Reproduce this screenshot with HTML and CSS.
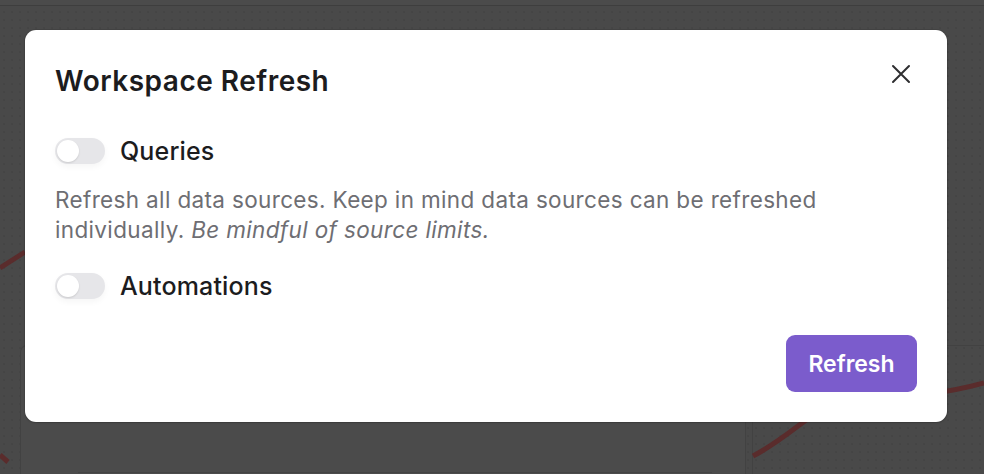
FILE: index.html
```html
<!DOCTYPE html>
<html lang="en">
<head>
<meta charset="utf-8">
<title>Workspace Refresh</title>
<link rel="stylesheet" href="styles.css">
</head>
<body>
<div class="app">
  <div class="topbar"></div>
  <div class="board">
    <div class="card card-left"><div class="card-rule"></div></div>
    <div class="card card-right"></div>
  </div>
  <svg class="chart-lines" width="984" height="474" viewBox="0 0 984 474">
    <path d="M0 268 L25 252" />
    <path d="M0 455 L8 462" />
    <path d="M753 456 C790 437 812 410 838 402 C880 398 930 398 984 383" />
  </svg>
</div>
<div class="overlay">
  <div class="modal">
    <div class="modal-head">
      <h2 class="modal-title">Workspace Refresh</h2>
      <button class="close-btn" aria-label="Close">
        <svg width="20" height="20" viewBox="0 0 20 20"><path d="M2 2 L18 18 M18 2 L2 18" /></svg>
      </button>
    </div>
    <div class="option option-first">
      <span class="toggle"><span class="thumb"></span></span>
      <span class="option-label">Queries</span>
    </div>
    <p class="desc">Refresh all data sources. Keep in mind data sources can be refreshed individually. <em>Be mindful of source limits.</em></p>
    <div class="option option-second">
      <span class="toggle"><span class="thumb"></span></span>
      <span class="option-label">Automations</span>
    </div>
    <div class="modal-foot">
      <button class="primary-btn">Refresh</button>
    </div>
  </div>
</div>
</body>
</html>
```

FILE: styles.css
```css
* { box-sizing: border-box; }
html, body { margin: 0; padding: 0; }
body {
  width: 984px;
  height: 474px;
  overflow: hidden;
  background: #4a4a4a;
  font-family: Inter, "Noto Sans", "Liberation Sans", sans-serif;
  position: relative;
}
.app {
  position: absolute;
  inset: 0;
  display: flex;
  flex-direction: column;
  background-color: #494949;
  background-image: radial-gradient(circle, #454545 0.7px, transparent 1.1px);
  background-size: 8px 8px;
}
.topbar {
  height: 6px;
  border-bottom: 1px solid #3e3e3e;
  background: #4b4b4b;
}
.board {
  flex: 1;
  display: flex;
  gap: 6px;
  padding: 339px 0 0 20px;
}
.card {
  border: 1px solid #424242;
  border-bottom: none;
  border-radius: 7px 7px 0 0;
  background: #4b4b4b;
}
.card-left { width: 726px; padding: 126px 0 0 57px; }
.card-rule { width: 634px; height: 1px; background: #434343; }
.card-right { flex: 1; border-right: none; border-radius: 7px 0 0 0; background: transparent; }
.chart-lines {
  position: absolute;
  left: 0; top: 0;
  fill: none;
  stroke: #5a2c2c;
  stroke-width: 5;
}
.overlay {
  position: absolute;
  inset: 0;
}
.modal {
  position: absolute;
  left: 25px;
  top: 30px;
  width: 922px;
  height: 392px;
  background: #fff;
  border-radius: 11px;
  box-shadow: 0 0 0 1px rgba(0,0,0,0.08), 0 1px 2px rgba(0,0,0,0.15);
  padding: 35px 30px 30px 30px;
  display: flex;
  flex-direction: column;
}
.modal-head {
  display: flex;
  justify-content: space-between;
  align-items: center;
  height: 32px;
}
.modal-title {
  margin: 0;
  font-size: 28px;
  font-weight: 600;
  color: #1c1c1e;
  line-height: 32px;
  letter-spacing: 0.5px;
}
.close-btn {
  border: none;
  background: none;
  padding: 0;
  width: 20px;
  height: 20px;
  margin-right: 6px;
  margin-top: -14px;
  display: flex;
}
.close-btn path { stroke: #2e2e30; stroke-width: 2; stroke-linecap: round; fill: none; }
.option {
  display: flex;
  align-items: center;
  gap: 15px;
  height: 30px;
}
.option-first { margin-top: 39px; }
.option-second { margin-top: 26px; }
.toggle {
  width: 50px;
  height: 26px;
  border-radius: 13px;
  background: #e6e6e9;
  display: flex;
  align-items: center;
  padding: 0 2px;
  box-shadow: 0 3px 6px rgba(0,0,0,0.04);
}
.thumb {
  width: 22px;
  height: 22px;
  border-radius: 50%;
  background: #fff;
  box-shadow: 0 1px 2px rgba(0,0,0,0.12);
}
.option-label {
  font-size: 25px;
  font-weight: 500;
  color: #1c1c1e;
  line-height: 30px;
  letter-spacing: 0.15px;
}
.desc {
  margin: 19px 0 0 0;
  font-size: 22.5px;
  line-height: 30px;
  color: #6e6e73;
  letter-spacing: 0.35px;
  max-width: 800px;
}
.desc em { font-style: italic; }
.modal-foot {
  margin-top: auto;
  display: flex;
  justify-content: flex-end;
}
.primary-btn {
  border: none;
  background: #7b5ccc;
  color: #fff;
  font-family: inherit;
  font-size: 23px;
  font-weight: 600;
  height: 57px;
  width: 131px;
  border-radius: 9px;
  padding: 0;
}
```
